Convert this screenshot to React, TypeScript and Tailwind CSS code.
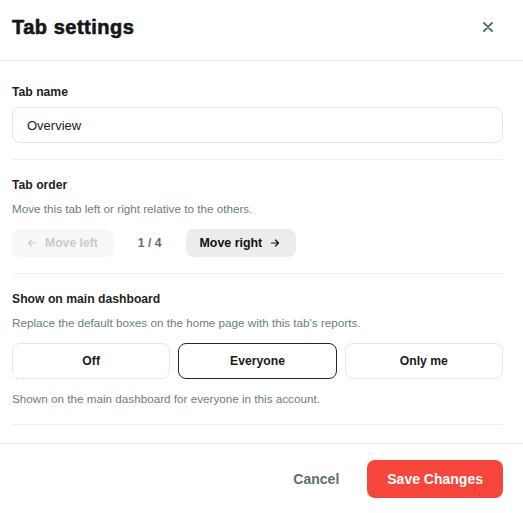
import { useState } from "react";

type Visibility = "off" | "everyone" | "me";

const visibilityOptions: { id: Visibility; label: string }[] = [
  { id: "off", label: "Off" },
  { id: "everyone", label: "Everyone" },
  { id: "me", label: "Only me" },
];

function Arrow({ direction }: { direction: "left" | "right" }) {
  const d =
    direction === "left"
      ? "M8.5 5H1.5M4.5 2L1.5 5l3 3"
      : "M1.5 5h7M5.5 2l3 3-3 3";
  return (
    <svg width="10" height="10" viewBox="0 0 10 10" fill="none" stroke="currentColor" strokeWidth="1.2" strokeLinecap="round" strokeLinejoin="round">
      <path d={d} />
    </svg>
  );
}

function SectionLabel({ children }: { children: React.ReactNode }) {
  return <p className="text-[12.2px] leading-4 font-bold text-[#1f1f1f]">{children}</p>;
}

function Hint({ children, className = "" }: { children: React.ReactNode; className?: string }) {
  return <p className={`text-[11.7px] leading-4 text-[#6a7f7c] ${className}`}>{children}</p>;
}

export default function App() {
  const [name, setName] = useState("Overview");
  const [visibility, setVisibility] = useState<Visibility>("everyone");

  return (
    <div className="flex min-h-screen w-full flex-col bg-white font-['Liberation_Sans',Arial,sans-serif]">
      {/* header */}
      <div className="flex items-center justify-between border-b border-[#ebeded] pb-[19px] pl-3 pr-[30px] pt-[13px]">
        <h2 className="text-[20px] leading-7 font-bold tracking-[0.5px] text-[#161616] [-webkit-text-stroke:0.6px_#161616]">
          Tab settings
        </h2>
        <button className="text-[#5b7574]" aria-label="Close">
          <svg width="10" height="10" viewBox="0 0 10 10" fill="none" stroke="currentColor" strokeWidth="2" strokeLinecap="round">
            <path d="M1 1l8 8M9 1L1 9" />
          </svg>
        </button>
      </div>

      {/* body */}
      <div className="flex flex-col pb-[18px] pl-3 pr-5 pt-[6px]">
        <div className="border-b border-[#eef1f1] pb-4 pt-[17px]">
          <SectionLabel>Tab name</SectionLabel>
          <input
            value={name}
            onChange={(e) => setName(e.target.value)}
            className="mt-[7px] h-9 w-full rounded-lg border border-[#dfe7e6] px-[14px] text-[13px] text-[#222] outline-none"
          />
        </div>

        <div className="border-b border-[#eef1f1] pb-4 pt-[17px]">
          <SectionLabel>Tab order</SectionLabel>
          <Hint className="mt-2">Move this tab left or right relative to the others.</Hint>
          <div className="mt-3 flex items-center gap-6">
            <button
              disabled
              className="flex h-7 items-center gap-2 rounded-lg bg-[#f8f8f8] pl-[15px] pr-4 text-[12.2px] font-bold text-[#cbcbcb]"
            >
              <Arrow direction="left" />
              Move left
            </button>
            <span className="text-[12.2px] font-bold text-[#5b6f6d]">1 / 4</span>
            <button className="flex h-7 items-center gap-2 rounded-lg bg-[#ececec] pl-[14px] pr-4 text-[12.4px] font-bold text-[#111]">
              Move right
              <Arrow direction="right" />
            </button>
          </div>
        </div>

        <div className="border-b border-[#eef1f1] pb-[17px] pt-[17px]">
          <SectionLabel>Show on main dashboard</SectionLabel>
          <Hint className="mt-2">Replace the default boxes on the home page with this tab's reports.</Hint>
          <div className="mt-3 grid grid-cols-3 gap-2">
            {visibilityOptions.map((opt) => (
              <button
                key={opt.id}
                onClick={() => setVisibility(opt.id)}
                className={
                  visibility === opt.id
                    ? "h-9 rounded-lg border border-[#262626] text-[12.2px] font-bold text-[#1a1a1a]"
                    : "h-9 rounded-lg border border-[#e3e9e8] text-[12.2px] font-bold text-[#1a1a1a]"
                }
              >
                {opt.label}
              </button>
            ))}
          </div>
          <Hint className="mt-3">Shown on the main dashboard for everyone in this account.</Hint>
        </div>
      </div>

      {/* footer */}
      <div className="flex items-center justify-end gap-7 border-t border-[#ebeded] py-4 pl-3 pr-5">
        <button className="text-[14px] font-bold text-[#5b6f6d]">Cancel</button>
        <button className="h-[38px] rounded-lg bg-[#f6463c] px-5 text-[14px] font-bold text-white">
          Save Changes
        </button>
      </div>
    </div>
  );
}
